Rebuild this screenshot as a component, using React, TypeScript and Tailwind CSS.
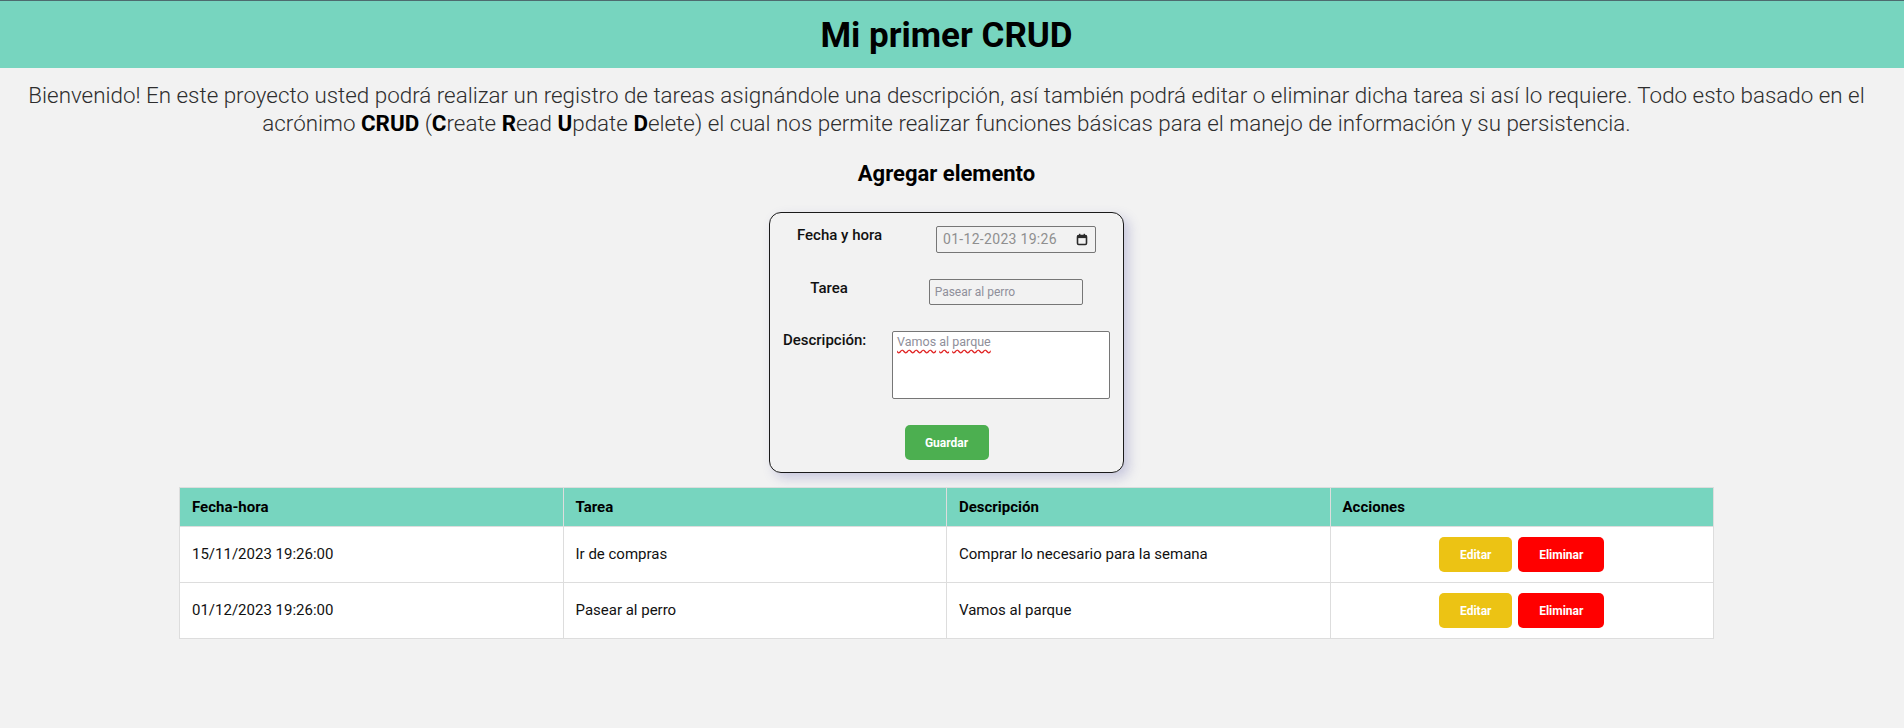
import React from "react";

function CalendarIcon() {
  return (
    <svg width="12" height="13" viewBox="0 0 12 13" aria-hidden="true">
      <rect x="1.5" y="2.5" width="9" height="9" rx="1.2" fill="none" stroke="#2b2b2b" strokeWidth="1.6" />
      <rect x="1.5" y="2.5" width="9" height="2.6" fill="#2b2b2b" />
      <rect x="3" y="0.8" width="1.4" height="2" fill="#2b2b2b" />
      <rect x="7.6" y="0.8" width="1.4" height="2" fill="#2b2b2b" />
    </svg>
  );
}

const rows = [
  { fecha: "15/11/2023 19:26:00", tarea: "Ir de compras", desc: "Comprar lo necesario para la semana" },
  { fecha: "01/12/2023 19:26:00", tarea: "Pasear al perro", desc: "Vamos al parque" },
];

export default function App() {
  return (
    <div className="min-h-screen bg-[#f2f2f2] font-['Roboto',sans-serif] text-black">
      <header className="h-[68px] border-t border-[#4d6b6e] bg-[#77d5bf] pr-[11px] pt-[2px] flex items-center justify-center">
        <h1 className="text-[35px] font-bold leading-none text-black">Mi primer CRUD</h1>
      </header>
      <main className="pr-[11px]">
        <p className="mt-[13px] px-[12px] text-center text-[22.4px] leading-[28px] font-light font-['Roboto_Light',Roboto,sans-serif] text-[#2e2e2e]">
          Bienvenido! En este proyecto usted podrá realizar un registro de tareas asignándole una descripción, así también podrá editar o eliminar dicha tarea si así lo requiere. Todo esto basado en el acrónimo{" "}
          <b className="font-bold font-['Roboto',sans-serif] text-black">CRUD</b> (<b className="font-bold font-['Roboto',sans-serif] text-black">C</b>reate{" "}
          <b className="font-bold font-['Roboto',sans-serif] text-black">R</b>ead <b className="font-bold font-['Roboto',sans-serif] text-black">U</b>pdate{" "}
          <b className="font-bold font-['Roboto',sans-serif] text-black">D</b>elete) el cual nos permite realizar funciones básicas para el manejo de información y su persistencia.
        </p>
        <h2 className="mt-[23px] text-center text-[22px] leading-[28px] font-bold">Agregar elemento</h2>

        <div className="mx-auto mt-[24px] w-[355px] rounded-[12px] border border-[#1a1a1a] bg-[#f2f2f2] shadow-[5px_5px_12px_rgba(90,90,170,0.28)] px-0 pt-[13px] pb-[12px] flex flex-col gap-[26px]">
          <div className="flex items-start justify-around">
            <span className="text-[15px] font-medium leading-[18px] text-[#111]">Fecha y hora</span>
            <div className="w-[160px] h-[27px] border border-[#767676] rounded-[2px] flex items-center justify-between pl-[6px] pr-[7px] text-[14px] text-[#8f8f8f]">
              <span className="tracking-[0.3px]">01-12-2023 19:26</span>
              <CalendarIcon />
            </div>
          </div>
          <div className="flex items-start justify-around">
            <span className="text-[15px] font-medium leading-[18px] text-[#111]">Tarea</span>
            <input
              type="text"
              placeholder="Pasear al perro"
              className="w-[154px] h-[26px] border border-[#767676] rounded-[2px] bg-transparent px-[5px] text-[12px] placeholder:text-[#8f8f9a] outline-none"
            />
          </div>
          <div className="flex items-start justify-around">
            <span className="text-[15px] font-medium leading-[18px] text-[#111]">Descripción:</span>
            <div className="w-[218px] h-[68px] border border-[#767676] rounded-[2px] bg-white px-[4px] pt-[2px] text-[12.5px] leading-[16px] text-[#8f8f9a]">
              <span className="underline decoration-wavy decoration-[#e02020] underline-offset-[3px]">Vamos</span>{" "}
              <span className="underline decoration-wavy decoration-[#e02020] underline-offset-[3px]">al</span>{" "}
              <span className="underline decoration-wavy decoration-[#e02020] underline-offset-[3px]">parque</span>
            </div>
          </div>
          <div className="flex justify-center">
            <button className="w-[84px] h-[35px] rounded-[5px] bg-[#4caf50] text-white text-[12px] font-bold">Guardar</button>
          </div>
        </div>

        <div className="mx-auto mt-[14px] w-[1535px]">
          <table className="w-full table-fixed border-collapse border border-[#dddddd] text-[15px]">
            <thead>
              <tr className="bg-[#77d5bf]">
                <th className="h-[39px] border border-[#dddddd] px-[12px] text-left font-bold">Fecha-hora</th>
                <th className="h-[39px] border border-[#dddddd] px-[12px] text-left font-bold">Tarea</th>
                <th className="h-[39px] border border-[#dddddd] px-[12px] text-left font-bold">Descripción</th>
                <th className="h-[39px] border border-[#dddddd] px-[12px] text-left font-bold">Acciones</th>
              </tr>
            </thead>
            <tbody className="bg-white">
              {rows.map((r) => (
                <tr key={r.fecha}>
                  <td className="h-[56px] border border-[#dddddd] px-[12px] text-[#111]">{r.fecha}</td>
                  <td className="h-[56px] border border-[#dddddd] px-[12px] text-[#111]">{r.tarea}</td>
                  <td className="h-[56px] border border-[#dddddd] px-[12px] text-[#111]">{r.desc}</td>
                  <td className="h-[56px] border border-[#dddddd] px-[12px]">
                    <div className="flex justify-center gap-[6px]">
                      <button className="w-[73px] h-[35px] rounded-[5px] bg-[#ecc314] text-white text-[12px] font-bold">Editar</button>
                      <button className="w-[86px] h-[35px] rounded-[5px] bg-[#ff0000] text-white text-[12px] font-bold">Eliminar</button>
                    </div>
                  </td>
                </tr>
              ))}
            </tbody>
          </table>
        </div>
      </main>
    </div>
  );
}
